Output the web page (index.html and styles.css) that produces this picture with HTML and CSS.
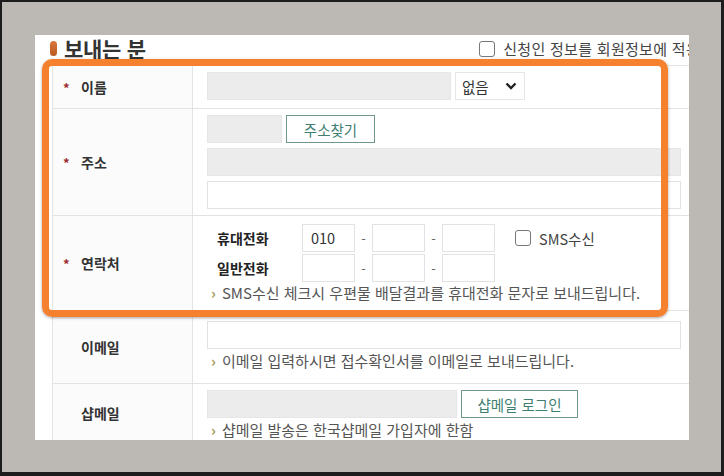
FILE: index.html
```html
<!DOCTYPE html>
<html lang="ko">
<head>
    <meta charset="UTF-8">
    <title>보내는 분</title>
    <link rel="stylesheet" href="styles.css">
</head>
<body>
    <div class="frame">
        <div class="panel">
            <div class="head">
                <h2 class="title"><span class="pill"></span>보내는 분</h2>
                <label class="apply"><span class="box"></span>신청인 정보를 회원정보에 적용</label>
            </div>
            <div class="form">
                <div class="row row-name">
                    <div class="label"><i>*</i>이름</div>
                    <div class="field">
                        <div class="line">
                            <span class="input grey w-name"></span>
                            <span class="select">없음
                                <svg width="12" height="8" viewBox="0 0 12 8"><path d="M1.5 1.5 6 6l4.5-4.5" fill="none" stroke="#222" stroke-width="2.4"/></svg>
                            </span>
                        </div>
                    </div>
                </div>
                <div class="row row-addr">
                    <div class="label"><i>*</i>주소</div>
                    <div class="field">
                        <div class="line">
                            <span class="input grey w-zip"></span>
                            <span class="btn w-find">주소찾기</span>
                        </div>
                        <span class="input grey full"></span>
                        <span class="input full"></span>
                    </div>
                </div>
                <div class="row row-tel">
                    <div class="label"><i>*</i>연락처</div>
                    <div class="field">
                        <div class="line">
                            <b class="tel-label">휴대전화</b>
                            <span class="input tel">010</span><span class="dash">-</span>
                            <span class="input tel"></span><span class="dash">-</span>
                            <span class="input tel"></span>
                            <label class="sms"><span class="box"></span>SMS수신</label>
                        </div>
                        <div class="line">
                            <b class="tel-label">일반전화</b>
                            <span class="input tel"></span><span class="dash">-</span>
                            <span class="input tel"></span><span class="dash">-</span>
                            <span class="input tel"></span>
                        </div>
                        <p class="note">SMS수신 체크시 우편물 배달결과를 휴대전화 문자로 보내드립니다.</p>
                    </div>
                </div>
                <div class="row row-mail">
                    <div class="label">이메일</div>
                    <div class="field">
                        <span class="input full"></span>
                        <p class="note">이메일 입력하시면 접수확인서를 이메일로 보내드립니다.</p>
                    </div>
                </div>
                <div class="row row-shop">
                    <div class="label">샵메일</div>
                    <div class="field">
                        <div class="line">
                            <span class="input grey w-shop"></span>
                            <span class="btn w-login">샵메일 로그인</span>
                        </div>
                        <p class="note">샵메일 발송은 한국샵메일 가입자에 한함</p>
                    </div>
                </div>
            </div>
        </div>
        <div class="mark"></div>
    </div>
</body>
</html>
```

FILE: styles.css
```css
html, body {
    margin: 0;
    background: #1c1c1c;
}
body {
    font-family: "Noto Sans CJK KR", "Noto Sans", sans-serif;
    color: #333;
}
.frame {
    position: relative;
    margin: 2px 3px 0 2px;
    height: 470px;
    background: #bcb8b4;
    padding: 33px 0 0 33px;
    box-sizing: border-box;
}
.panel {
    width: 654px;
    height: 405px;
    background: #fff;
    overflow: hidden;
}
.head {
    display: flex;
    align-items: center;
    height: 30px;
    padding-bottom: 3px;
    box-sizing: border-box;
    white-space: nowrap;
}
.title {
    display: flex;
    align-items: center;
    margin: 0 0 0 15px;
    font-size: 21px;
    line-height: 21px;
    font-weight: bold;
    color: #333;
    letter-spacing: -0.3px;
}
.pill {
    width: 7px;
    height: 15px;
    border-radius: 4px;
    background: linear-gradient(#d9783a, #b95a20);
    margin-right: 7px;
}
.apply {
    display: flex;
    align-items: center;
    margin-left: auto;
    margin-right: -11px;
    font-size: 15px;
    line-height: 20px;
    color: #444;
    letter-spacing: 0.3px;
}
.box {
    display: inline-block;
    width: 14px;
    height: 14px;
    border: 1px solid #777;
    border-radius: 3px;
    margin-right: 8px;
    background: #fff;
    flex: none;
}
.form {
    margin-left: 17px;
    border-top: 1px solid #e3e3e3;
}
.row {
    display: flex;
    border-bottom: 1px solid #e3e3e3;
}
.label {
    width: 141px;
    border-left: 1px solid #e3e3e3;
    border-right: 1px solid #e3e3e3;
    background: #fbfbfb;
    display: flex;
    align-items: center;
    padding-left: 28px;
    box-sizing: border-box;
    font-size: 14px;
    font-weight: bold;
    color: #333;
}
.label i {
    font-style: normal;
    color: #9b2c2c;
    font-size: 13px;
    margin: 0 10px 0 -18px;
    width: 8px;
}
.field {
    flex: 1;
    display: flex;
    flex-direction: column;
    gap: 5px;
    padding: 6px 8px 0 14px;
}
.line {
    display: flex;
    align-items: center;
    gap: 4px;
}
.input {
    display: block;
    height: 28px;
    box-sizing: border-box;
    border: 1px solid #e2e2e2;
    background: #fff;
    font-size: 14.5px;
    line-height: 26px;
    padding-left: 8px;
    color: #333;
}
.grey {
    background: #ececec;
    border-color: #e6e6e6;
}
.full { width: 474px; }
.w-name { width: 244px; }
.w-zip { width: 75px; }
.w-shop { width: 250px; }
.select {
    width: 70px;
    height: 28px;
    box-sizing: border-box;
    border: 1px solid #e6e6e6;
    display: flex;
    align-items: center;
    justify-content: space-between;
    padding: 0 7px 0 6px;
    font-size: 14.5px;
}
.btn {
    display: flex;
    align-items: center;
    justify-content: center;
    height: 28px;
    box-sizing: border-box;
    border: 1px solid #6f978e;
    color: #3f7f72;
    font-size: 14.5px;
    background: #fff;
}
.w-find { width: 89px; }
.w-login { width: 117px; }
.row-name { height: 42px; }
.row-name .field { padding-top: 6px; }
.row-addr { height: 106px; }
.row-tel { height: 94px; }
.row-tel .field { padding-top: 8px; gap: 2px; }
.row-tel .line { gap: 0; }
.tel-label {
    width: 95px;
    padding-left: 10px;
    box-sizing: border-box;
    font-size: 14px;
    color: #222;
}
.tel {
    width: 53px;
}
.dash {
    width: 17px;
    text-align: center;
    color: #666;
    font-size: 13px;
}
.sms {
    display: flex;
    align-items: center;
    margin-left: 20px;
    font-size: 14.5px;
    color: #444;
}
.row-mail { height: 72px; }
.row-mail .field { padding-top: 10px; gap: 3px; }
.row-shop { height: 58px; }
.row-shop .field { gap: 3px; }
.note {
    margin: 0;
    padding-left: 4px;
    font-size: 15px;
    line-height: 18px;
    color: #555;
}
.note::before {
    content: "›";
    color: #a59a58;
    font-weight: bold;
    margin-right: 6px;
}
.mark {
    position: absolute;
    left: 40px;
    top: 57px;
    width: 626px;
    height: 258px;
    box-sizing: border-box;
    border: 7px solid #f5812e;
    border-radius: 10px;
    box-shadow: 0 1px 3px rgba(0, 0, 0, 0.35);
}
```
